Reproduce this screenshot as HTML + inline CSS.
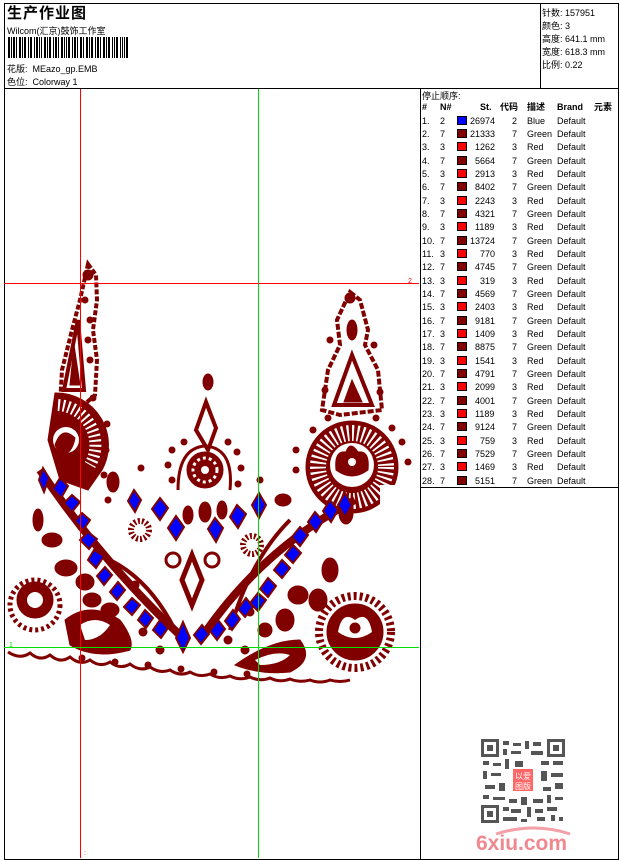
<!DOCTYPE html>
<html><head><meta charset="utf-8"><style>
*{margin:0;padding:0;box-sizing:border-box}
body{width:620px;height:860px;background:#fff;position:relative;overflow:hidden;font-family:"Liberation Sans","Noto Sans CJK SC",sans-serif;color:#000}
.a{position:absolute;white-space:nowrap}
.f9{font-size:9px}
.row{position:absolute;left:422px;height:12px;font-size:9px;line-height:12px;width:196px}
.row span{position:absolute}
.sw{width:10px;height:9px;border:1px solid #000;top:1px;left:35px}
</style></head><body>
<div class="a" style="left:4px;top:3px;width:615px;height:857px;border:1px solid #000"></div>
<div class="a" style="left:4px;top:88px;width:615px;height:1px;background:#000"></div>
<div class="a" style="left:540px;top:3px;width:1px;height:86px;background:#000"></div>
<div class="a" style="left:420px;top:88px;width:1px;height:772px;background:#000"></div>
<div class="a" style="left:420px;top:487px;width:199px;height:1px;background:#000"></div>

<div class="a" style="left:7px;top:2px;font-size:15px;font-weight:bold;letter-spacing:1px">生产作业图</div>
<div class="a f9" style="left:7px;top:24px">Wilcom(汇京)鼓饰工作室</div>
<svg class="a" style="left:8px;top:37px" width="122" height="21">
<g fill="#000">
<rect x="0" y="0" width="2" height="21"/><rect x="3" y="0" width="1" height="21"/><rect x="5" y="0" width="2" height="21"/><rect x="8" y="0" width="1" height="21"/><rect x="11" y="0" width="2" height="21"/><rect x="14" y="0" width="1" height="21"/><rect x="16" y="0" width="2" height="21"/><rect x="20" y="0" width="1" height="21"/><rect x="22" y="0" width="2" height="21"/><rect x="26" y="0" width="1" height="21"/><rect x="28" y="0" width="2" height="21"/><rect x="31" y="0" width="1" height="21"/><rect x="33" y="0" width="1" height="21"/><rect x="36" y="0" width="2" height="21"/><rect x="39" y="0" width="1" height="21"/><rect x="41" y="0" width="2" height="21"/><rect x="45" y="0" width="1" height="21"/><rect x="47" y="0" width="2" height="21"/><rect x="50" y="0" width="1" height="21"/><rect x="53" y="0" width="2" height="21"/><rect x="56" y="0" width="1" height="21"/><rect x="58" y="0" width="1" height="21"/><rect x="60" y="0" width="2" height="21"/><rect x="64" y="0" width="1" height="21"/><rect x="66" y="0" width="2" height="21"/><rect x="69" y="0" width="1" height="21"/><rect x="72" y="0" width="2" height="21"/><rect x="75" y="0" width="1" height="21"/><rect x="78" y="0" width="2" height="21"/><rect x="81" y="0" width="1" height="21"/><rect x="83" y="0" width="2" height="21"/><rect x="87" y="0" width="1" height="21"/><rect x="89" y="0" width="2" height="21"/><rect x="92" y="0" width="1" height="21"/><rect x="95" y="0" width="2" height="21"/><rect x="98" y="0" width="1" height="21"/><rect x="100" y="0" width="2" height="21"/><rect x="104" y="0" width="1" height="21"/><rect x="106" y="0" width="1" height="21"/><rect x="108" y="0" width="2" height="21"/><rect x="112" y="0" width="1" height="21"/><rect x="114" y="0" width="1" height="21"/><rect x="116" y="0" width="1" height="21"/><rect x="118" y="0" width="2" height="21"/>
</g></svg>
<div class="a f9" style="left:7px;top:62px">花版: &nbsp;MEazo_gp.EMB</div>
<div class="a f9" style="left:7px;top:75px">色位: &nbsp;Colorway 1</div>

<div class="a f9" style="left:542px;top:6px">针数: 157951</div>
<div class="a f9" style="left:542px;top:19px">颜色: 3</div>
<div class="a f9" style="left:542px;top:32px">高度: 641.1 mm</div>
<div class="a f9" style="left:542px;top:45px">宽度: 618.3 mm</div>
<div class="a f9" style="left:542px;top:58px">比例: 0.22</div>

<div class="a f9" style="left:422px;top:89px">停止顺序:</div>
<div class="row" style="top:101px;font-weight:bold;text-decoration:underline"><span style="left:0">#</span><span style="left:18px">N#</span><span style="left:58px">St.</span><span style="left:78px">代码</span><span style="left:105px">描述</span><span style="left:135px">Brand</span><span style="left:172px">元素</span></div>
<div id="rows">
<div class="row" style="top:115px"><span style="left:0">1.</span><span style="left:18px">2</span><span class="sw" style="background:#00f"></span><span style="left:48px">26974</span><span style="left:90px">2</span><span style="left:105px">Blue</span><span style="left:135px">Default</span></div>
<div class="row" style="top:128px"><span style="left:0">2.</span><span style="left:18px">7</span><span class="sw" style="background:#800000"></span><span style="left:48px">21333</span><span style="left:90px">7</span><span style="left:105px">Green</span><span style="left:135px">Default</span></div>
<div class="row" style="top:141px"><span style="left:0">3.</span><span style="left:18px">3</span><span class="sw" style="background:#f00"></span><span style="left:53px">1262</span><span style="left:90px">3</span><span style="left:105px">Red</span><span style="left:135px">Default</span></div>
<div class="row" style="top:155px"><span style="left:0">4.</span><span style="left:18px">7</span><span class="sw" style="background:#800000"></span><span style="left:53px">5664</span><span style="left:90px">7</span><span style="left:105px">Green</span><span style="left:135px">Default</span></div>
<div class="row" style="top:168px"><span style="left:0">5.</span><span style="left:18px">3</span><span class="sw" style="background:#f00"></span><span style="left:53px">2913</span><span style="left:90px">3</span><span style="left:105px">Red</span><span style="left:135px">Default</span></div>
<div class="row" style="top:181px"><span style="left:0">6.</span><span style="left:18px">7</span><span class="sw" style="background:#800000"></span><span style="left:53px">8402</span><span style="left:90px">7</span><span style="left:105px">Green</span><span style="left:135px">Default</span></div>
<div class="row" style="top:195px"><span style="left:0">7.</span><span style="left:18px">3</span><span class="sw" style="background:#f00"></span><span style="left:53px">2243</span><span style="left:90px">3</span><span style="left:105px">Red</span><span style="left:135px">Default</span></div>
<div class="row" style="top:208px"><span style="left:0">8.</span><span style="left:18px">7</span><span class="sw" style="background:#800000"></span><span style="left:53px">4321</span><span style="left:90px">7</span><span style="left:105px">Green</span><span style="left:135px">Default</span></div>
<div class="row" style="top:221px"><span style="left:0">9.</span><span style="left:18px">3</span><span class="sw" style="background:#f00"></span><span style="left:53px">1189</span><span style="left:90px">3</span><span style="left:105px">Red</span><span style="left:135px">Default</span></div>
<div class="row" style="top:235px"><span style="left:0">10.</span><span style="left:18px">7</span><span class="sw" style="background:#800000"></span><span style="left:48px">13724</span><span style="left:90px">7</span><span style="left:105px">Green</span><span style="left:135px">Default</span></div>
<div class="row" style="top:248px"><span style="left:0">11.</span><span style="left:18px">3</span><span class="sw" style="background:#f00"></span><span style="left:58px">770</span><span style="left:90px">3</span><span style="left:105px">Red</span><span style="left:135px">Default</span></div>
<div class="row" style="top:261px"><span style="left:0">12.</span><span style="left:18px">7</span><span class="sw" style="background:#800000"></span><span style="left:53px">4745</span><span style="left:90px">7</span><span style="left:105px">Green</span><span style="left:135px">Default</span></div>
<div class="row" style="top:275px"><span style="left:0">13.</span><span style="left:18px">3</span><span class="sw" style="background:#f00"></span><span style="left:58px">319</span><span style="left:90px">3</span><span style="left:105px">Red</span><span style="left:135px">Default</span></div>
<div class="row" style="top:288px"><span style="left:0">14.</span><span style="left:18px">7</span><span class="sw" style="background:#800000"></span><span style="left:53px">4569</span><span style="left:90px">7</span><span style="left:105px">Green</span><span style="left:135px">Default</span></div>
<div class="row" style="top:301px"><span style="left:0">15.</span><span style="left:18px">3</span><span class="sw" style="background:#f00"></span><span style="left:53px">2403</span><span style="left:90px">3</span><span style="left:105px">Red</span><span style="left:135px">Default</span></div>
<div class="row" style="top:315px"><span style="left:0">16.</span><span style="left:18px">7</span><span class="sw" style="background:#800000"></span><span style="left:53px">9181</span><span style="left:90px">7</span><span style="left:105px">Green</span><span style="left:135px">Default</span></div>
<div class="row" style="top:328px"><span style="left:0">17.</span><span style="left:18px">3</span><span class="sw" style="background:#f00"></span><span style="left:53px">1409</span><span style="left:90px">3</span><span style="left:105px">Red</span><span style="left:135px">Default</span></div>
<div class="row" style="top:341px"><span style="left:0">18.</span><span style="left:18px">7</span><span class="sw" style="background:#800000"></span><span style="left:53px">8875</span><span style="left:90px">7</span><span style="left:105px">Green</span><span style="left:135px">Default</span></div>
<div class="row" style="top:355px"><span style="left:0">19.</span><span style="left:18px">3</span><span class="sw" style="background:#f00"></span><span style="left:53px">1541</span><span style="left:90px">3</span><span style="left:105px">Red</span><span style="left:135px">Default</span></div>
<div class="row" style="top:368px"><span style="left:0">20.</span><span style="left:18px">7</span><span class="sw" style="background:#800000"></span><span style="left:53px">4791</span><span style="left:90px">7</span><span style="left:105px">Green</span><span style="left:135px">Default</span></div>
<div class="row" style="top:381px"><span style="left:0">21.</span><span style="left:18px">3</span><span class="sw" style="background:#f00"></span><span style="left:53px">2099</span><span style="left:90px">3</span><span style="left:105px">Red</span><span style="left:135px">Default</span></div>
<div class="row" style="top:395px"><span style="left:0">22.</span><span style="left:18px">7</span><span class="sw" style="background:#800000"></span><span style="left:53px">4001</span><span style="left:90px">7</span><span style="left:105px">Green</span><span style="left:135px">Default</span></div>
<div class="row" style="top:408px"><span style="left:0">23.</span><span style="left:18px">3</span><span class="sw" style="background:#f00"></span><span style="left:53px">1189</span><span style="left:90px">3</span><span style="left:105px">Red</span><span style="left:135px">Default</span></div>
<div class="row" style="top:421px"><span style="left:0">24.</span><span style="left:18px">7</span><span class="sw" style="background:#800000"></span><span style="left:53px">9124</span><span style="left:90px">7</span><span style="left:105px">Green</span><span style="left:135px">Default</span></div>
<div class="row" style="top:435px"><span style="left:0">25.</span><span style="left:18px">3</span><span class="sw" style="background:#f00"></span><span style="left:58px">759</span><span style="left:90px">3</span><span style="left:105px">Red</span><span style="left:135px">Default</span></div>
<div class="row" style="top:448px"><span style="left:0">26.</span><span style="left:18px">7</span><span class="sw" style="background:#800000"></span><span style="left:53px">7529</span><span style="left:90px">7</span><span style="left:105px">Green</span><span style="left:135px">Default</span></div>
<div class="row" style="top:461px"><span style="left:0">27.</span><span style="left:18px">3</span><span class="sw" style="background:#f00"></span><span style="left:53px">1469</span><span style="left:90px">3</span><span style="left:105px">Red</span><span style="left:135px">Default</span></div>
<div class="row" style="top:475px"><span style="left:0">28.</span><span style="left:18px">7</span><span class="sw" style="background:#800000"></span><span style="left:53px">5151</span><span style="left:90px">7</span><span style="left:105px">Green</span><span style="left:135px">Default</span></div>
</div>

<svg class="a" style="left:0;top:0" width="420" height="860">
<g fill="#800000" stroke="#800000">
<!-- left spire -->
<path d="M88 264 L96 275 L97 300 L93 330 L97 360 L95 395 L78 410 L60 405 L62 370 L72 330 L80 300 Z" fill="none" stroke-width="4" stroke-dasharray="5 2"/>
<path d="M78 320 L84 390 L64 390 Z" fill="none" stroke-width="4"/>
<path d="M74 345 L80 385 L70 385Z"/>
<circle cx="88" cy="275" r="5"/><circle cx="85" cy="300" r="3"/><circle cx="88" cy="340" r="3"/><circle cx="90" cy="320" r="3"/><circle cx="90" cy="360" r="3"/>
<!-- left fan -->
<path d="M55 393 A52 52 0 0 1 102 470 L88 490 L60 480 L48 440 Z"/>
<path d="M58 405 A40 40 0 0 1 90 465" fill="none" stroke="#fff" stroke-width="12" stroke-dasharray="2 3"/>
<circle cx="66" cy="440" r="13" fill="#fff" stroke="none"/>
<path d="M55 445 Q62 425 75 438 Q72 455 60 455 Z"/>
<circle cx="107" cy="424" r="3"/><circle cx="106" cy="450" r="3"/><circle cx="104" cy="475" r="3"/><circle cx="93" cy="398" r="3"/><circle cx="108" cy="500" r="3"/>
<!-- right spire -->
<path d="M350 292 L360 300 L368 330 L365 345 L378 370 L382 410 L340 415 L322 410 L328 370 L340 345 L337 320 Z" fill="none" stroke-width="4" stroke-dasharray="6 2"/>
<path d="M352 355 L372 405 L334 405 Z" fill="none" stroke-width="4"/>
<path d="M352 380 L362 402 L344 402Z"/>
<ellipse cx="352" cy="330" rx="5" ry="10"/>
<circle cx="350" cy="298" r="5"/><circle cx="330" cy="340" r="3"/><circle cx="374" cy="345" r="3"/><circle cx="325" cy="390" r="3"/><circle cx="380" cy="392" r="3"/>
<!-- right medallion -->
<circle cx="352" cy="467" r="46"/>
<circle cx="352" cy="467" r="34" fill="none" stroke="#fff" stroke-width="16" stroke-dasharray="2 3"/>
<circle cx="352" cy="465" r="22" fill="#fff" stroke="none"/>
<path d="M336 470 Q334 450 346 452 Q350 440 358 452 Q370 450 368 470 Q352 482 336 470Z"/>
<circle cx="352" cy="462" r="4" fill="#fff" stroke="none"/>
<rect x="380" y="485" width="30" height="30" fill="#fff" stroke="none"/>
<circle cx="313" cy="430" r="3"/><circle cx="328" cy="418" r="3"/><circle cx="376" cy="418" r="3"/><circle cx="392" cy="428" r="3"/><circle cx="296" cy="450" r="3"/><circle cx="402" cy="442" r="3"/><circle cx="296" cy="470" r="3"/><circle cx="408" cy="462" r="3"/>
<!-- center -->
<ellipse cx="208" cy="382" rx="5" ry="8"/>
<path d="M206 402 L216 428 L208 450 L196 430 Z" fill="none" stroke-width="4"/>
<path d="M178 490 Q178 448 205 446 Q234 448 230 490" fill="none" stroke-width="3"/>
<circle cx="205" cy="470" r="18"/><circle cx="205" cy="470" r="12" fill="none" stroke="#fff" stroke-width="3" stroke-dasharray="3 3"/><circle cx="205" cy="470" r="4" fill="#fff" stroke="none"/>
<circle cx="184" cy="442" r="3"/><circle cx="172" cy="450" r="3"/><circle cx="168" cy="465" r="3"/><circle cx="228" cy="442" r="3"/><circle cx="237" cy="452" r="3"/><circle cx="241" cy="468" r="3"/><circle cx="141" cy="468" r="3"/><circle cx="172" cy="480" r="3"/><circle cx="238" cy="484" r="3"/><circle cx="260" cy="480" r="3"/>
<ellipse cx="113" cy="482" rx="6" ry="10"/><ellipse cx="283" cy="500" rx="8" ry="6"/>
<ellipse cx="188" cy="515" rx="5" ry="9"/><ellipse cx="205" cy="512" rx="6" ry="10"/><ellipse cx="222" cy="510" rx="5" ry="9"/>
<path d="M192 555 L202 580 L192 605 L182 580 Z" fill="none" stroke-width="5"/>
<circle cx="173" cy="560" r="7" fill="none" stroke-width="3"/><circle cx="212" cy="560" r="7" fill="none" stroke-width="3"/>
<circle cx="140" cy="530" r="9" fill="none" stroke-width="6" stroke-dasharray="2 2"/>
<circle cx="252" cy="545" r="9" fill="none" stroke-width="6" stroke-dasharray="2 2"/>
<!-- arcs of diamond chains -->
<path d="M40 470 Q100 560 185 640" fill="none" stroke-width="8"/>
<path d="M355 500 Q260 550 200 640" fill="none" stroke-width="8"/>
<path d="M110 560 Q150 580 175 630" fill="none" stroke-width="4"/>
<path d="M290 520 Q250 560 230 630" fill="none" stroke-width="4"/>
<!-- leaves -->
<ellipse cx="38" cy="520" rx="5" ry="11"/><ellipse cx="52" cy="540" rx="10" ry="7"/><ellipse cx="66" cy="568" rx="11" ry="8"/><ellipse cx="85" cy="582" rx="9" ry="8"/><ellipse cx="92" cy="600" rx="9" ry="7"/><ellipse cx="88" cy="625" rx="8" ry="7"/><ellipse cx="110" cy="610" rx="9" ry="7"/>
<ellipse cx="346" cy="513" rx="7" ry="11"/><ellipse cx="330" cy="570" rx="8" ry="12"/><ellipse cx="318" cy="600" rx="9" ry="11"/><ellipse cx="298" cy="595" rx="10" ry="9"/><ellipse cx="285" cy="620" rx="9" ry="11"/><ellipse cx="265" cy="630" rx="7" ry="7"/>
<!-- bottom left flower -->
<circle cx="35" cy="600" r="18"/><circle cx="35" cy="600" r="8" fill="#fff" stroke="none"/>
<circle cx="35" cy="605" r="25" fill="none" stroke-width="5" stroke-dasharray="3 3"/>
<!-- bottom left paisley -->
<path d="M65 620 Q90 600 120 620 Q135 640 130 650 Q95 660 70 645 Z"/>
<path d="M80 625 Q95 615 110 625 Q100 640 85 640 Z" fill="#fff" stroke="none"/>
<!-- bottom right paisley -->
<path d="M235 665 Q270 640 300 640 Q315 660 290 672 Q260 675 235 665Z"/>
<path d="M255 660 Q275 650 290 655 Q280 665 260 665Z" fill="#fff" stroke="none"/>
<!-- bottom right flower -->
<circle cx="355" cy="632" r="28"/><circle cx="355" cy="632" r="36" fill="none" stroke-width="8" stroke-dasharray="3 3"/>
<path d="M338 632 Q342 610 355 620 Q368 610 372 632 Q355 644 338 632Z" fill="#fff" stroke="none"/>
<circle cx="355" cy="628" r="5"/>
<!-- scallop -->
<path d="M8 652 Q20 660 30 653 Q40 662 50 655 Q60 664 70 657 Q80 666 90 660 Q100 668 110 662 Q120 670 130 664 Q140 672 150 667 Q160 674 170 670 Q180 677 190 672 Q200 678 210 674 Q220 680 230 676 Q240 681 250 677 Q260 682 270 678 Q280 683 290 679 Q300 683 310 680 Q320 684 330 680 Q340 683 350 680" fill="none" stroke-width="3"/>
<circle cx="82" cy="658" r="3"/><circle cx="115" cy="662" r="3"/><circle cx="148" cy="665" r="3"/><circle cx="181" cy="669" r="3"/><circle cx="214" cy="672" r="3"/><circle cx="247" cy="674" r="3"/><circle cx="143" cy="632" r="4"/><circle cx="135" cy="585" r="4"/><circle cx="250" cy="612" r="4"/><circle cx="228" cy="640" r="4"/><circle cx="160" cy="650" r="4"/><circle cx="245" cy="650" r="4"/>
</g>
<g fill="#00f" stroke="#800000" stroke-width="2">
<path d="M43 468 L49 478 L44 492 L39 480Z"/><path d="M60 478 L68 486 L61 498 L53 489Z"/><path d="M72 495 L80 502 L72 512 L64 503Z"/><path d="M82 513 L90 520 L83 530 L75 521Z"/><path d="M88 532 L97 539 L89 549 L80 540Z"/><path d="M94 550 L104 556 L96 568 L88 560Z"/><path d="M105 567 L112 575 L104 585 L97 576Z"/><path d="M118 582 L125 590 L117 600 L110 592Z"/><path d="M132 598 L140 605 L132 615 L124 607Z"/><path d="M145 610 L153 618 L146 628 L138 620Z"/><path d="M160 620 L168 628 L161 638 L153 630Z"/><path d="M183 622 L190 638 L183 652 L176 638Z"/>
<path d="M134 490 L141 500 L135 512 L128 501Z"/><path d="M160 498 L168 508 L160 520 L152 509Z"/><path d="M176 516 L184 527 L176 540 L168 528Z"/><path d="M215 518 L223 528 L216 542 L208 529Z"/><path d="M237 505 L246 514 L238 528 L230 517Z"/><path d="M259 493 L266 505 L259 518 L252 505Z"/>
<path d="M345 493 L352 505 L345 517 L338 505Z"/><path d="M330 500 L338 510 L331 522 L323 511Z"/><path d="M315 512 L323 521 L316 532 L308 522Z"/><path d="M300 527 L308 535 L300 546 L292 537Z"/><path d="M293 545 L301 553 L293 563 L285 555Z"/><path d="M282 560 L290 568 L282 578 L274 570Z"/><path d="M268 578 L276 586 L268 597 L260 589Z"/><path d="M258 593 L266 600 L258 611 L250 603Z"/><path d="M246 598 L253 607 L245 617 L238 609Z"/><path d="M233 610 L240 619 L232 630 L225 621Z"/><path d="M218 620 L225 629 L217 640 L210 631Z"/><path d="M202 625 L209 634 L201 644 L194 635Z"/>
</g>
<line x1="80.5" y1="89" x2="80.5" y2="858" stroke="#f00" stroke-width="1"/>
<line x1="258.5" y1="89" x2="258.5" y2="858" stroke="#0d0" stroke-width="1"/>
<line x1="4" y1="283.5" x2="419" y2="283.5" stroke="#f00" stroke-width="1"/>
<line x1="4" y1="647.5" x2="419" y2="647.5" stroke="#0d0" stroke-width="1"/>
<text x="408" y="283" font-size="7" fill="#f00" font-family="Liberation Sans">2</text>
<text x="9" y="647" font-size="7" fill="#0d0" font-family="Liberation Sans">1</text>
<text x="84" y="855" font-size="7" fill="#f00" font-family="Liberation Sans">:</text>
</svg>

<svg class="a" style="left:481px;top:739px" width="84" height="84">
<rect width="84" height="84" fill="#fff"/>
<g fill="#555">
<rect x="0" y="0" width="18" height="18"/><rect x="66" y="0" width="18" height="18"/><rect x="0" y="66" width="18" height="18"/>
</g>
<g fill="#fff"><rect x="3" y="3" width="12" height="12"/><rect x="69" y="3" width="12" height="12"/><rect x="3" y="69" width="12" height="12"/></g>
<g fill="#555"><rect x="6" y="6" width="6" height="6"/><rect x="72" y="6" width="6" height="6"/><rect x="6" y="72" width="6" height="6"/>
<path d="M22 2h6v4h-6zM32 4h8v3h-8zM44 2h4v8h-4zM52 3h8v4h-8zM22 10h4v6h-4zM30 12h10v3h-10zM50 12h12v4h-12zM2 22h6v4h-6zM12 24h8v3h-8zM24 20h4v10h-4zM34 22h8v6h-8zM60 22h8v4h-8zM72 22h10v4h-10zM2 32h4v8h-4zM10 34h10v3h-10zM60 32h6v10h-6zM70 34h12v4h-12zM4 46h10v4h-10zM18 44h6v8h-6zM62 48h8v4h-8zM74 44h8v6h-8zM2 56h6v4h-6zM12 58h12v3h-12zM28 60h8v4h-8zM40 58h6v8h-6zM52 60h10v4h-10zM66 56h4v8h-4zM74 58h8v3h-8zM22 68h6v4h-6zM30 70h10v4h-10zM46 68h4v10h-4zM54 70h8v4h-8zM66 68h10v4h-10zM22 78h14v4h-14zM40 80h6v3h-6zM56 78h8v4h-8zM70 76h4v6h-4zM78 78h4v4h-4z"/></g>
<rect x="30" y="28" width="24" height="26" fill="#fff"/>
<rect x="32" y="30" width="20" height="22" fill="#f66"/>
<text x="34" y="40" font-size="8" fill="#fff" font-family="Noto Sans CJK SC,sans-serif">以</text><text x="42" y="40" font-size="8" fill="#fff" font-family="Noto Sans CJK SC,sans-serif">爱</text>
<text x="34" y="50" font-size="8" fill="#fff" font-family="Noto Sans CJK SC,sans-serif">图</text><text x="42" y="50" font-size="8" fill="#fff" font-family="Noto Sans CJK SC,sans-serif">版</text>
</svg>
<svg class="a" style="left:474px;top:824px" width="104" height="30">
<path d="M22 10 Q60 -2 96 10" fill="none" stroke="#f3a0a8" stroke-width="3"/>
<text x="2" y="26" font-size="21" font-weight="bold" fill="#f08890" font-family="Liberation Sans">6xiu.com</text>
</svg>
</body></html>
